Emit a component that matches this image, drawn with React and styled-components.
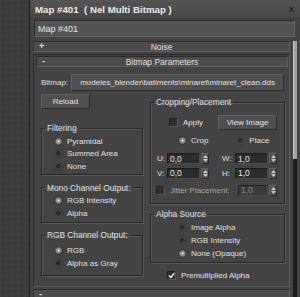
import React from "react";
import styled, { createGlobalStyle } from "styled-components";

const GlobalStyle = createGlobalStyle`
  html, body {
    margin: 0;
    padding: 0;
    background: #3a3a3a;
  }
  * {
    box-sizing: border-box;
  }
`;

const Page = styled.div`
  width: 300px;
  height: 297px;
  display: flex;
  overflow: hidden;
  font-family: "Liberation Sans", Arial, sans-serif;
  font-size: 8px;
  color: #e0e0e0;
`;

const Desktop = styled.div`
  width: 29px;
  flex: none;
  background-color: #3b3b3b;
  background-image: linear-gradient(#404040 1px, transparent 1px),
    linear-gradient(90deg, #404040 1px, transparent 1px);
  background-size: 6px 6px;
`;

const Window = styled.div`
  flex: 1;
  display: flex;
  flex-direction: column;
  background: #444444;
  border-left: 1px solid #1c1c1c;
  min-width: 0;
`;

const TitleBar = styled.div`
  height: 19px;
  flex: none;
  display: flex;
  align-items: center;
  justify-content: space-between;
  padding: 0 6px 0 5px;
  background: linear-gradient(#555555, #474747);
  border-bottom: 1px solid #3a3a3a;
`;

const Title = styled.span`
  font-weight: bold;
  font-size: 9.7px;
  color: #ececec;
  white-space: pre;
`;

const Close = styled.span`
  font-weight: bold;
  font-size: 9px;
  color: #1e1e1e;
`;

const NameRow = styled.div`
  padding: 1px 5px 0 4px;
`;

const NameField = styled.div`
  height: 17px;
  display: flex;
  align-items: center;
  padding-left: 3px;
  background: #545454;
  border: 1px solid #2a2a2a;
  border-right-color: #666;
  border-bottom-color: #666;
  font-size: 9px;
  color: #e4e4e4;
`;

const Body = styled.div`
  flex: 1;
  display: flex;
  margin-top: 3px;
  min-height: 0;
`;

const Rollouts = styled.div`
  flex: 1;
  display: flex;
  flex-direction: column;
  gap: 2px;
  padding-left: 3px;
  padding-top: 1px;
  min-width: 0;
`;

const Header = styled.div`
  height: 11px;
  flex: none;
  position: relative;
  display: flex;
  align-items: center;
  justify-content: center;
  margin: ${(p) => (p.$inset ? "1px 1px 0 2px" : "0")};
  background: #4c4c4c;
  border: 1px solid #2c2c2c;
  border-right-color: #5e5e5e;
  border-bottom-color: #5e5e5e;
  font-size: 8.5px;
  color: #e0e0e0;
`;

const Toggle = styled.span`
  position: absolute;
  left: 5px;
  top: -1px;
  font-weight: bold;
  font-size: 9px;
`;

const Panel = styled.div`
  flex: none;
  height: 233px;
  display: flex;
  flex-direction: column;
  border: 1px solid #2a2a2a;
  border-right-color: #5a5a5a;
  border-bottom-color: #5a5a5a;
`;

const PanelContent = styled.div`
  padding: 7px 5px 0 7px;
`;

const BitmapRow = styled.div`
  display: flex;
  align-items: center;
  gap: 3px;
`;

const Button = styled.div`
  height: ${(p) => p.$h || 15}px;
  width: ${(p) => (p.$w ? `${p.$w}px` : "auto")};
  flex: ${(p) => (p.$grow ? 1 : "none")};
  display: flex;
  align-items: center;
  justify-content: center;
  background: #505050;
  border: 1px solid #2c2c2c;
  border-top-color: #626262;
  border-left-color: #626262;
  white-space: nowrap;
  overflow: hidden;
  color: #e0e0e0;
`;

const Columns = styled.div`
  display: grid;
  grid-template-columns: 102px 135px;
  column-gap: 7px;
  margin-top: 3px;
`;

const Column = styled.div`
  display: flex;
  flex-direction: column;
  align-items: flex-start;
  padding-top: ${(p) => p.$top || 0}px;
`;

const Group = styled.fieldset`
  width: 100%;
  margin: ${(p) => p.$mt || 0}px 0 0 0;
  padding: ${(p) => p.$pt || 2}px 0 ${(p) => p.$pb || 0}px 0;
  border: 1px solid #262626;
  box-shadow: 1px 1px 0 #595959, inset 1px 1px 0 #595959;
  min-width: 0;
`;

const Legend = styled.legend`
  margin-left: 3px;
  padding: 0 2px;
  line-height: 10px;
  font-size: 8.3px;
  color: #e0e0e0;
`;

const Option = styled.div`
  height: ${(p) => p.$h || 12.5}px;
  display: flex;
  align-items: center;
  padding-left: ${(p) => p.$indent || 13}px;
  gap: 5px;
`;

const RadioDot = styled.span`
  width: 7px;
  height: 7px;
  flex: none;
  border-radius: 50%;
  background: ${(p) => (p.$on ? "#f2f2f2" : "#303030")};
  box-shadow: ${(p) =>
    p.$on
      ? "0 0 0 1px #3a3a3a, inset 0 0 0 1.5px #888"
      : "inset 1px 1px 0 #1c1c1c, 0 0 0 1px #3c3c3c"};
  border: 1px solid ${(p) => (p.$on ? "#5a5a5a" : "#505050")};
`;

const Radio = ({ on, children, indent, h }) => (
  <Option $indent={indent} $h={h}>
    <RadioDot $on={on} />
    <span>{children}</span>
  </Option>
);

const Box = styled.span`
  width: 9px;
  height: 9px;
  flex: none;
  display: flex;
  align-items: center;
  justify-content: center;
  background: #2f2f2f;
  border: 1px solid #1f1f1f;
  border-right-color: #5a5a5a;
  border-bottom-color: #5a5a5a;
`;

const Check = ({ on }) => (
  <Box>
    {on && (
      <svg width="7" height="7" viewBox="0 0 7 7">
        <path d="M1 3.5 L3 5.5 L6.2 1.2" stroke="#f4f4f4" strokeWidth="1.4" fill="none" />
      </svg>
    )}
  </Box>
);

const Row = styled.div`
  height: ${(p) => p.$h || 15}px;
  display: flex;
  align-items: center;
  margin-top: ${(p) => p.$mt || 0}px;
  padding-left: ${(p) => p.$pl || 0}px;
  gap: ${(p) => p.$gap || 0}px;
`;

const CheckLabel = styled.div`
  display: flex;
  align-items: center;
  gap: 5px;
  width: ${(p) => (p.$w ? `${p.$w}px` : "auto")};
  color: ${(p) => (p.$dim ? "#a8a8a8" : "#e0e0e0")};
`;

const SpinLabel = styled.span`
  width: ${(p) => p.$w}px;
  flex: none;
`;

const Field = styled.div`
  width: ${(p) => p.$w || 33}px;
  height: 11px;
  flex: none;
  display: flex;
  align-items: center;
  padding-left: 2px;
  background: ${(p) => (p.$dim ? "#3a3a3a" : "#2c2c2c")};
  border: 1px solid #1e1e1e;
  border-right-color: #4e4e4e;
  border-bottom-color: #4e4e4e;
  color: ${(p) => (p.$dim ? "#8a8a8a" : "#e6e6e6")};
  font-size: 8.5px;
`;

const Arrows = styled.div`
  width: 8px;
  height: 11px;
  flex: none;
  margin-left: 1px;
  display: flex;
  flex-direction: column;
  align-items: center;
  justify-content: center;
  gap: 1px;
  background: #4e4e4e;
  border: 1px solid #2c2c2c;
  border-top-color: #626262;
  border-left-color: #626262;
`;

const Spinner = ({ value, dim, w }) => (
  <>
    <Field $dim={dim} $w={w}>
      {value}
    </Field>
    <Arrows>
      <svg width="5" height="3" viewBox="0 0 5 3">
        <path d="M0 3 L2.5 0 L5 3 Z" fill="#cfcfcf" />
      </svg>
      <svg width="5" height="3" viewBox="0 0 5 3">
        <path d="M0 0 L2.5 3 L5 0 Z" fill="#cfcfcf" />
      </svg>
    </Arrows>
  </>
);

const SpinPair = styled.div`
  display: flex;
  align-items: center;
  width: ${(p) => p.$w}px;
`;

const Scrollbar = styled.div`
  width: 9px;
  flex: none;
  display: flex;
  flex-direction: column;
  padding: 1px 2px 0 1px;
  margin-left: 1px;
`;

const Thumb = styled.div`
  height: 118px;
  width: 4px;
  margin-left: 1px;
  background: #a2a2a2;
  border-left: 1px solid #c4c4c4;
`;

const Track = styled.div`
  flex: 1;
  width: 4px;
  margin-left: 1px;
  background: #1c1c1c;
`;

export default function App() {
  return (
    <>
      <GlobalStyle />
      <Page>
        <Desktop />
        <Window>
          <TitleBar>
            <Title>{"Map #401  ( Nel Multi Bitmap )"}</Title>
            <Close>x</Close>
          </TitleBar>
          <NameRow>
            <NameField>Map #401</NameField>
          </NameRow>
          <Body>
            <Rollouts>
              <Header>
                <Toggle>+</Toggle>
                Noise
              </Header>
              <Panel>
                <Header $inset>
                  <Toggle>-</Toggle>
                  Bitmap Parameters
                </Header>
                <PanelContent>
                  <BitmapRow>
                    <span>Bitmap:</span>
                    <Button $h={17} $grow>
                      modeles_blender\batiments\minaret\minaret_clean.dds
                    </Button>
                  </BitmapRow>
                  <Columns>
                    <Column>
                      <Button $w={49}>Reload</Button>
                      <Group $mt={14} $pt={2} $pb={1}>
                        <Legend>Filtering</Legend>
                        <Radio on>Pyramidal</Radio>
                        <Radio>Summed Area</Radio>
                        <Radio>None</Radio>
                      </Group>
                      <Group $mt={8} $pt={1.5} $pb={2}>
                        <Legend>Mono Channel Output:</Legend>
                        <Radio on h={13}>RGB Intensity</Radio>
                        <Radio h={13}>Alpha</Radio>
                      </Group>
                      <Group $mt={7} $pt={3.5} $pb={5}>
                        <Legend>RGB Channel Output:</Legend>
                        <Radio on h={13}>RGB</Radio>
                        <Radio h={13}>Alpha as Gray</Radio>
                      </Group>
                    </Column>
                    <Column $top={3}>
                      <Group $pt={7} $pb={2}>
                        <Legend>Cropping/Placement</Legend>
                        <Row $h={16} $pl={18}>
                          <CheckLabel $w={49}>
                            <Check />
                            Apply
                          </CheckLabel>
                          <Button $w={59}>View Image</Button>
                        </Row>
                        <Row $h={20}>
                          <Radio on indent={28}>Crop</Radio>
                          <Radio indent={29}>Place</Radio>
                        </Row>
                        <Row $h={17} $pl={6}>
                          <SpinPair $w={65}>
                            <SpinLabel $w={10}>U:</SpinLabel>
                            <Spinner value="0,0" />
                          </SpinPair>
                          <SpinLabel $w={13}>W:</SpinLabel>
                          <Spinner value="1,0" />
                        </Row>
                        <Row $h={12} $pl={6}>
                          <SpinPair $w={65}>
                            <SpinLabel $w={10}>V:</SpinLabel>
                            <Spinner value="0,0" />
                          </SpinPair>
                          <SpinLabel $w={13}>H:</SpinLabel>
                          <Spinner value="1,0" />
                        </Row>
                        <Row $h={22} $pl={5}>
                          <CheckLabel $w={82} $dim>
                            <Check />
                            Jitter Placement:
                          </CheckLabel>
                          <Spinner value="1,0" dim w={30} />
                        </Row>
                      </Group>
                      <Group $mt={5} $pt={1.5} $pb={2}>
                        <Legend>Alpha Source</Legend>
                        <Radio indent={28} h={13}>Image Alpha</Radio>
                        <Radio indent={28} h={13}>RGB Intensity</Radio>
                        <Radio on indent={28} h={13}>None (Opaque)</Radio>
                      </Group>
                      <Row $h={15} $mt={5} $pl={17}>
                        <CheckLabel>
                          <Check on />
                          Premultiplied Alpha
                        </CheckLabel>
                      </Row>
                    </Column>
                  </Columns>
                </PanelContent>
              </Panel>
              <Header>
                <Toggle>-</Toggle>
              </Header>
            </Rollouts>
            <Scrollbar>
              <Thumb />
              <Track />
            </Scrollbar>
          </Body>
        </Window>
      </Page>
    </>
  );
}
